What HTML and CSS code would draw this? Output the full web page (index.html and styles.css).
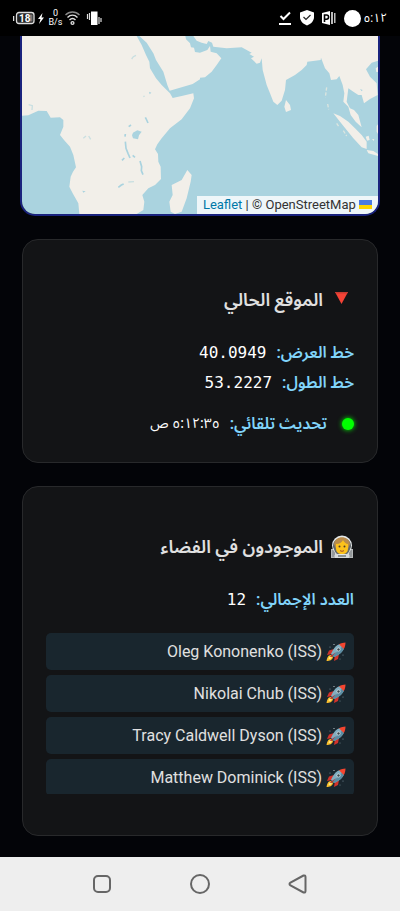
FILE: index.html
```html
<!DOCTYPE html>
<html lang="ar" dir="rtl">
<head>
    <meta charset="UTF-8">
    <meta name="viewport" content="width=device-width, initial-scale=1.0">
    <title>متتبع المحطة</title>
    <link rel="stylesheet" href="styles.css">
</head>
<body>
    <!-- shared emoji -->
    <svg class="symbols" width="0" height="0" aria-hidden="true">
        <symbol id="rocket" viewBox="0 0 20 20">
            <circle cx="4" cy="5" r=".6" fill="#78909c"/>
            <circle cx="8" cy="2.5" r=".6" fill="#cfd8dc"/>
            <circle cx="17" cy="13" r=".6" fill="#78909c"/>
            <circle cx="14" cy="17" r=".5" fill="#78909c"/>
            <path d="M8 7 3 8.5 1 13l5-1zM13 12l-1 5-4 2 1-6z" fill="#d3322b"/>
            <path d="M5 13c-3 0-4 3-4.500 6 3 0 6-1 6.500-4z" fill="#fbc02d"/>
            <path d="M5 14c-1.500.5-2 2-2.500 3 1.500 0 3-1 3.500-2z" fill="#fff59d"/>
            <path d="M5 12C7 7 10 3 14 2l4 4c-1 4-5 7-10 9z" fill="#82aec0"/>
            <path d="M6 13c4-2 8-5 11-10l1 3c-1 4-5 7-10 9z" fill="#5b8da3"/>
            <path d="M13 2.300C15 1 17.500.6 19.500.5c0 2-.5 4.500-1.700 6.500z" fill="#f4452f"/>
            <circle cx="12.500" cy="7.500" r="2" fill="#cfd8dc"/>
            <circle cx="12.500" cy="7.500" r="1.200" fill="#37474f"/>
            <path d="M10 10 5 15.500l-1-1z" fill="#c62828"/>
        </symbol>
    </svg>

    <header class="status-bar" dir="ltr">
        <div class="status-left">
            <svg width="22" height="14" viewBox="0 0 22 14">
                <path d="M.5 5v5" stroke="#ddd" stroke-width="1.500"/>
                <rect x="3.500" y="1.500" width="17.500" height="11" rx="2.500" fill="#222" stroke="#ddd" stroke-width="1.300"/>
                <rect x="17" y="3.500" width="2.500" height="7" fill="#777"/>
                <text class="battery-text" x="6" y="10.500">18</text>
            </svg>
            <svg width="8" height="12" viewBox="0 0 8 12"><path d="M4.500 1 0 7h2.500L1 12l5-6.500H3.500z" fill="#fff"/></svg>
            <div class="speed"><span>0</span><span>B/s</span></div>
            <svg width="15" height="16" viewBox="0 0 15 16" fill="none" stroke="#ddd" stroke-width="1.400">
                <path d="M.5 5c4-4 10-4 14 0" stroke="#888"/>
                <path d="M2.500 7.500c3-3 7-3 10 0M4.500 10c2-2 4-2 6 0"/>
                <circle cx="7.500" cy="13" r="1.400"/>
            </svg>
            <svg width="20" height="16" viewBox="0 0 20 16">
                <rect x="8" y="1.500" width="6.500" height="13.500" fill="#fff"/>
                <path d="M4.500 4v5M6.500 3v7M16 7v7M18 8v4" stroke="#ddd" stroke-width="1.200"/>
            </svg>
        </div>
        <div class="status-right">
            <svg width="14" height="16" viewBox="0 0 14 16"><path d="m2.500 6 3 3 6.500-6.500M1 14h12" fill="none" stroke="#fff" stroke-width="2"/></svg>
            <svg width="14" height="16" viewBox="0 0 14 16">
                <path d="M7 0 14 2.500V7c0 4-3 7-7 8.500C3 14 0 11 0 7V2.500z" fill="#fff"/>
                <path d="m3.500 7 2.500 2.500 4.500-4.500" fill="none" stroke="#222" stroke-width="1.200"/>
            </svg>
            <svg width="14" height="16" viewBox="0 0 14 16">
                <path d="m0 3 8-2v14l-8-2z" fill="#fff"/>
                <path d="M9 2h2v12H9zM12 3h1.500v10H12z" fill="#bbb"/>
                <path d="M2.500 12V5h2a2 2 0 0 1 0 4.200h-2" fill="none" stroke="#000" stroke-width="1.600"/>
            </svg>
            <span class="status-dot"></span>
            <span class="clock">٥:١٢</span>
        </div>
    </header>

    <main class="container">
        <div class="map" dir="ltr">
            <!-- Indian Ocean -->
            <svg class="map-tiles" viewBox="66 18 1068 534" preserveAspectRatio="xMidYMid slice">
                <rect x="66" y="18" width="1068" height="534" fill="#aad3df"/>
                <g fill="#f2efe9">
                    <path d="M66 18H410L425 45 438 75 448 95 450 115 468 145 485 165 500 180 510 190 518 204 545 198 580 190 582 205 570 235 545 268 510 295 485 325 472 343 465 358 474 372 475 395 482 410 483 447 465 465 445 475 427 495 433 515 430 540 410 552H238L235 520 218 490 208 470 212 440 219 425 228 412 220 375 210 350 192 330 180 315 190 290V270L180 262 152 263 140 243 115 242 85 256 66 257z"/>
                    <path d="M418 18 440 38 460 70 468 90 490 125 502 165 509 182 545 172 578 162 600 148V143L615 142 635 125 650 105 664 85 650 70 632 65 630 48 622 60 600 68 585 66 582 53 573 52 570 40 558 28 556 18z"/>
                    <path d="M580 18 590 32 605 38 620 42 625 33 636 38 640 50 680 55 725 52 740 60 755 68 748 72 762 80 753 85 770 101 780 98 785 85 788 120 800 165 810 190 820 215 832 225 845 212 855 180 858 150 885 135 905 120 920 105 922 95 962 90 963 83 975 115 988 130 993 150 1010 148 1018 138 1028 165 1033 190 1030 215 1045 230 1052 255 1067 275 1085 292 1075 255 1062 240 1050 235 1040 215 1045 175 1060 185 1075 195 1085 195 1092 220 1110 207 1133 195 1130 160 1110 140 1098 118 1115 98 1134 92V18z"/>
                    <path d="M1000 250 1020 258 1045 275 1065 295 1085 315 1100 335V357L1085 352 1060 325 1040 300 1020 275zM1100 360 1120 363 1134 372V378L1105 370z"/>
                    <path d="M858 210 870 225 873 240 858 246 853 230zM562 420 575 435 572 455 560 505 545 545 525 552 512 545 508 515 518 495 515 465 545 450zM1134 283 1130 288V305L1134 312zM1134 110 1127 115 1129 126H1134zM1097 320 1106 317 1109 330 1101 332zM1116 327 1123 328 1121 333z"/>
                    <path d="M980 172 976 202M983 222 986 238M1010 280 1018 292M1030 302 1040 318" fill="none" stroke="#dce5df" stroke-width="4" stroke-dasharray="10 5"/>
                </g>
                <g fill="#aad3df">
                    <path d="M399 308 412 301 425 305 417 316 414 328 399 325 396 316zM447 185 454 188 449 193zM247 482 257 484 250 488zM176 264 184 268 180 275zM1080 177 1088 180 1085 184z"/>
                    <path d="M376 335 378 355 384 370 390 384M420 393 425 410 424 422 429 434M436 262 440 270 444 279M355 472 364 465 371 462M366 391 373 384M386 290 393 285M398 376 405 382M375 320 376 312" fill="none" stroke="#aad3df" stroke-width="5"/>
                    <path d="M395 87 400 80 408 76M250 325 258 318M266 318 272 328M385 456 402 455M86 224 97 227 96 240M430 200 434 198" fill="none" stroke="#c9dfe1" stroke-width="4"/>
                </g>
            </svg>
            <div class="attribution">
                <a href="#">Leaflet</a> | © OpenStreetMap
                <svg width="13" height="9" viewBox="0 0 13 9"><path fill="#4c7be1" d="M0 0h13v5H0z"/><path fill="#ffd500" d="M0 5h13v4H0z"/></svg>
            </div>
        </div>

        <section class="card">
            <h2>
                <svg class="emoji" viewBox="0 0 24 24"><path d="M5 4h13l-6.500 12z" fill="#f44336"/><path d="M5 4h13l-.8 1.500H6z" fill="#c63b31"/></svg>
                الموقع الحالي
            </h2>
            <p class="info"><span class="label">خط العرض:</span><span class="value">40.0949</span></p>
            <p class="info"><span class="label">خط الطول:</span><span class="value">53.2227</span></p>
            <p class="info update"><span class="live-dot"></span><span class="label">تحديث تلقائي:</span><span class="value time">٥:١٢:٣٥ ص</span></p>
        </section>

        <section class="card">
            <h2>
                <svg class="emoji" viewBox="0 0 24 24">
                    <path d="M1 23v-9h3V8h16v6h3v9z" fill="#b5b8b9"/>
                    <path d="M3 15v7M5 14v6M21 15v7M19 14v6" stroke="#747b7e"/>
                    <circle cx="12" cy="10.500" r="10" fill="#e4e8e9"/>
                    <path d="M3 12C2 0 22 0 21 12l-3 7H6z" fill="#62696c"/>
                    <path d="M4 9c1-9 15-9 16 0l-2 5H6z" fill="#b98c4b"/>
                    <path d="M6 9c4 0 6-2 7-4 1 2 3 4 5 4v4c0 4-2 6-6 6s-6-2-6-6z" fill="#fcc21b"/>
                    <circle cx="9.500" cy="11.500" r="1" fill="#503b2a"/>
                    <circle cx="14.500" cy="11.500" r="1" fill="#503b2a"/>
                    <path d="M10 15.500c1 1 3 1 4 0" fill="none" stroke="#a3482e"/>
                    <path d="M5 17c2 4 12 4 14 0v6H5z" fill="#d7dbdc"/>
                    <path d="M8 21h8" stroke="#737a7d" stroke-width="1.500"/>
                </svg>
                الموجودون في الفضاء
            </h2>
            <p class="info"><span class="label">العدد الإجمالي:</span><span class="value">12</span></p>
            <ul class="astronauts">
                <li><svg class="rocket"><use href="#rocket"/></svg><span dir="ltr">Oleg Kononenko (ISS)</span></li>
                <li><svg class="rocket"><use href="#rocket"/></svg><span dir="ltr">Nikolai Chub (ISS)</span></li>
                <li><svg class="rocket"><use href="#rocket"/></svg><span dir="ltr">Tracy Caldwell Dyson (ISS)</span></li>
                <li><svg class="rocket"><use href="#rocket"/></svg><span dir="ltr">Matthew Dominick (ISS)</span></li>
            </ul>
        </section>
    </main>

    <nav class="nav-bar" dir="ltr">
        <button type="button" aria-label="التطبيقات"><svg width="20" height="20" viewBox="0 0 20 20"><rect x="2" y="2" width="16" height="16" rx="4"/></svg></button>
        <button type="button" aria-label="الرئيسية"><svg width="20" height="20" viewBox="0 0 20 20"><circle cx="10" cy="10" r="9"/></svg></button>
        <button type="button" aria-label="رجوع"><svg width="20" height="20" viewBox="0 0 20 20"><path d="M15.500 1.500 2.500 8.500q-2 1.500 0 3l13 7q2 .5 2-1.500V3q0-2-2-1.500z"/></svg></button>
    </nav>
</body>
</html>
```
FILE: styles.css
```css
* {
    box-sizing: border-box;
}
body {
    margin: 0;
    min-height: 100vh;
    display: flex;
    flex-direction: column;
    background-color: #030408;
    color: #e0e0e0;
    font-family: Roboto, "Noto Sans Arabic", "DejaVu Sans", sans-serif;
    font-size: 16px;
}
.symbols {
    position: absolute;
}
.status-bar {
    display: flex;
    justify-content: space-between;
    align-items: center;
    height: 36px;
    padding: 0 13px;
    background-color: #000;
    color: #fff;
}
.status-left,
.status-right {
    display: flex;
    align-items: center;
    gap: 3px;
}
.status-right {
    gap: 8px;
}
.battery-text {
    font-size: 10px;
    font-weight: bold;
    fill: #fff;
}
.speed {
    display: flex;
    flex-direction: column;
    align-items: center;
    width: 13px;
    font-size: 9px;
    line-height: 9px;
}
.status-dot {
    width: 17px;
    height: 17px;
    border-radius: 50%;
    background-color: #fff;
}
.clock {
    margin-left: -5px;
    font-size: 12px;
}
.container {
    flex: 1;
    padding: 0 20px 21px;
}
.map {
    position: relative;
    height: 180px;
    border: 2px solid #1a237e;
    border-top: none;
    border-radius: 0 0 15px 15px;
    overflow: hidden;
}
.map-tiles {
    display: block;
    width: 100%;
    height: 100%;
}
.attribution {
    position: absolute;
    right: 0;
    bottom: 0;
    padding: 0 6px;
    background-color: rgba(255, 255, 255, 0.8);
    color: #333;
    font-size: 13px;
    line-height: 18px;
}
.attribution a {
    color: #0078a8;
    text-decoration: none;
}
.card {
    margin: 23px 2px 0;
    padding: 46px 23px 23px;
    background-color: #131416;
    border: 1px solid #28292b;
    border-radius: 16px;
}
.card h2 {
    display: flex;
    align-items: center;
    gap: 7px;
    margin: 0 0 24px;
    font-size: 18px;
    font-weight: 600;
    line-height: 28px;
}
.emoji {
    width: 24px;
    height: 24px;
}
.info {
    display: flex;
    align-items: center;
    gap: 10px;
    margin: 0;
    line-height: 30px;
}
.label {
    color: #81d4fa;
    font-weight: 600;
}
.value {
    color: #fff;
    font-family: "DejaVu Sans Mono", monospace;
}
.update {
    margin-top: 11px;
}
.live-dot {
    width: 12px;
    height: 12px;
    margin-left: 5px;
    border-radius: 50%;
    background-color: #0f0;
    box-shadow: 0 0 5px #0f0;
}
.time {
    font-family: "Noto Sans Arabic", "DejaVu Sans Mono", monospace;
    font-size: 14px;
}
.astronauts {
    max-height: 161px;
    margin: 18px 0;
    padding: 0;
    overflow-y: auto;
    scrollbar-width: none;
    list-style: none;
}
.astronauts li {
    display: flex;
    align-items: center;
    gap: 4px;
    height: 37px;
    margin-bottom: 5px;
    padding: 0 8px;
    background-color: #19262e;
    border-radius: 5px;
}
.rocket {
    width: 20px;
    height: 20px;
}
.nav-bar {
    display: flex;
    justify-content: center;
    align-items: center;
    gap: 58px;
    height: 54px;
    background-color: #eee;
}
.nav-bar button {
    display: flex;
    justify-content: center;
    width: 40px;
    padding: 0;
    background: none;
    border: none;
}
.nav-bar svg {
    fill: none;
    stroke: #666;
    stroke-width: 2;
}
```
